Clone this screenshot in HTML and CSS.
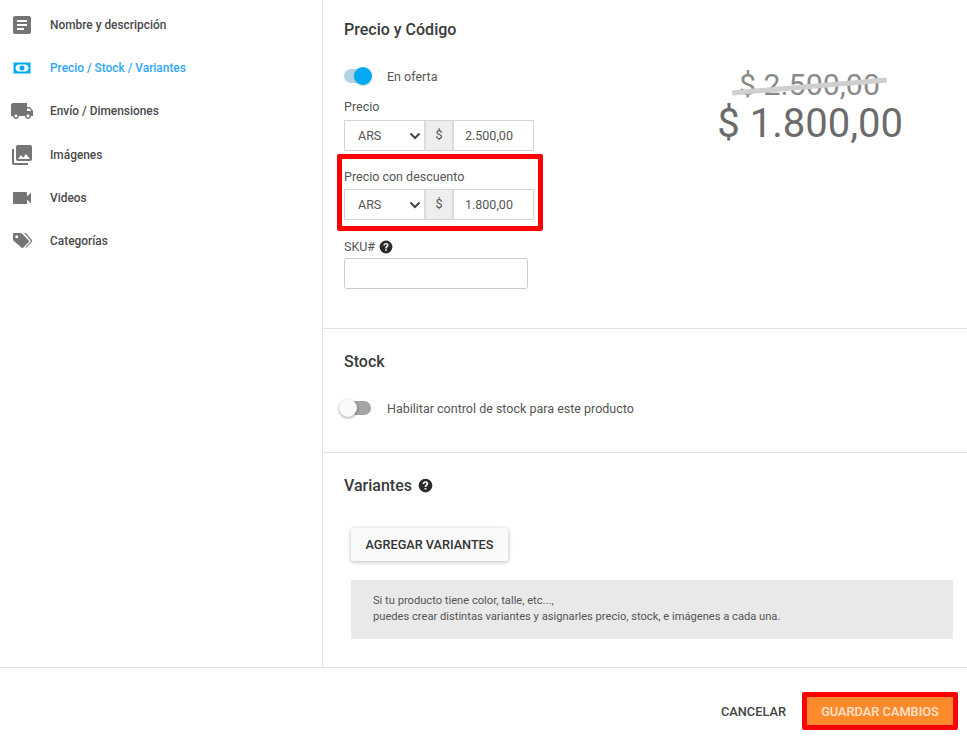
FILE: index.html
```html
<!DOCTYPE html>
<html lang="es">
<head>
<meta charset="utf-8">
<title>Precio / Stock / Variantes</title>
<link rel="stylesheet" href="styles.css">
</head>
<body>
<div class="page">
  <div class="main">
    <nav class="sidebar">
      <a class="nav-item"><span class="nav-icon"><svg width="24" height="24" viewBox="0 0 24 24"><path d="M19 3H5c-1.100 0-2 .9-2 2v14c0 1.100.9 2 2 2h14c1.100 0 2-.9 2-2V5c0-1.100-.9-2-2-2zm-5 14H7v-2h7v2zm3-4H7v-2h10v2zm0-4H7V7h10v2z"/></svg></span>Nombre y descripción</a>
      <a class="nav-item active"><span class="nav-icon"><svg width="24" height="24" viewBox="0 0 24 24"><path fill-rule="evenodd" d="M3.500 6.500h17v11h-17zM9 8.500c-2 0-3.500 1.500-3.500 3.500s1.500 3.500 3.500 3.500h6c2 0 3.500-1.500 3.500-3.500S17 8.500 15 8.500zM12 9.500a2.500 2.500 0 1 1 0 5 2.500 2.500 0 0 1 0-5z"/></svg></span>Precio / Stock / Variantes</a>
      <a class="nav-item"><span class="nav-icon"><svg width="24" height="24" viewBox="0 0 24 24"><path d="M20 8h-3V4H3c-1.100 0-2 .9-2 2v11h2c0 1.660 1.340 3 3 3s3-1.340 3-3h6c0 1.660 1.340 3 3 3s3-1.340 3-3h2v-5l-3-4zM6 18.500c-.83 0-1.500-.67-1.500-1.500s.67-1.500 1.500-1.500 1.500.67 1.500 1.500-.67 1.500-1.500 1.500zm13.500-9l1.960 2.500H17V9.500h2.500zm-1.500 9c-.83 0-1.500-.67-1.500-1.500s.67-1.500 1.500-1.500 1.500.67 1.500 1.500-.67 1.500-1.500 1.500z"/></svg></span>Envío / Dimensiones</a>
      <a class="nav-item"><span class="nav-icon"><svg width="24" height="24" viewBox="0 0 24 24"><path d="M22 16V4c0-1.100-.9-2-2-2H8c-1.100 0-2 .9-2 2v12c0 1.100.9 2 2 2h12c1.100 0 2-.9 2-2zm-11-4l2.030 2.710L16 11l4 5H8l3-4zM2 6v14c0 1.100.9 2 2 2h14v-2H4V6H2z"/></svg></span>Imágenes</a>
      <a class="nav-item"><span class="nav-icon"><svg width="24" height="24" viewBox="0 0 24 24"><path d="M17 10.500V7c0-.55-.45-1-1-1H4c-.55 0-1 .45-1 1v10c0 .55.45 1 1 1h12c.55 0 1-.45 1-1v-3.500l4 4v-11l-4 4z"/></svg></span>Videos</a>
      <a class="nav-item"><span class="nav-icon"><svg width="24" height="24" viewBox="0 0 24 24"><path d="M3 5.500C3 4.700 3.700 4 4.500 4h6c.5 0 1 .2 1.300.6l6.700 6.700c.6.600.6 1.500 0 2.100l-5.100 5.100c-.6.600-1.500.6-2.100 0L3.600 11.800C3.200 11.400 3 11 3 10.500zM6.700 6.200a1.500 1.500 0 1 0 0 3 1.500 1.500 0 0 0 0-3z"/><path d="M14 4h1.200c.4 0 .8.200 1.100.5l5.400 6.300c.6.600.6 1.500 0 2.100l-5 5.500c-.4.400-1 .5-1.500.3l4.700-5.200c.9-.9.900-2.200 0-3z"/></svg></span>Categorías</a>
    </nav>

    <div class="content">
      <section class="section section-price">
        <h2 class="heading">Precio y Código</h2>
        <div class="price-columns">
          <div class="price-form">
            <div class="toggle-row">
              <span class="toggle on"><span class="knob"></span></span>
              <span class="toggle-label">En oferta</span>
            </div>
            <div class="field">
              <label class="label">Precio</label>
              <div class="money">
                <span class="cur">ARS<svg class="chev" width="12" height="8" viewBox="0 0 12 8"><path d="M1.500 1.500 6 6l4.500-4.500" fill="none" stroke="#444" stroke-width="2"/></svg></span>
                <span class="sym">$</span>
                <span class="amt">2.500,00</span>
              </div>
            </div>
            <div class="field field-discount">
              <span class="mark mark-field"></span>
              <label class="label">Precio con descuento</label>
              <div class="money">
                <span class="cur">ARS<svg class="chev" width="12" height="8" viewBox="0 0 12 8"><path d="M1.500 1.500 6 6l4.500-4.500" fill="none" stroke="#444" stroke-width="2"/></svg></span>
                <span class="sym">$</span>
                <span class="amt">1.800,00</span>
              </div>
            </div>
            <div class="field field-sku">
              <label class="label label-help">SKU#
                <svg class="help" width="14" height="14" viewBox="0 0 24 24"><path d="M12 1a11 11 0 1 0 0 22 11 11 0 0 0 0-22zm1.300 17.500h-2.700V16h2.700v2.500zm2.600-7.700c-.9 1.200-2.500 1.600-2.600 3.600h-2.600c0-3 1.600-3.500 2.500-4.500.8-.9.500-2.500-1.200-2.500-1.300 0-2 1-2 2.100H7.500c0-2.500 2-4.300 4.500-4.300 3.500 0 5.500 3 3.900 5.600z"/></svg>
              </label>
              <div class="sku-input"></div>
            </div>
          </div>
          <div class="price-display">
            <div class="old-price">$ 2.500,00<span class="strike"></span></div>
            <div class="new-price">$ 1.800,00</div>
          </div>
        </div>
      </section>

      <section class="section section-stock">
        <h2 class="heading">Stock</h2>
        <div class="toggle-row stock-toggle">
          <span class="toggle off"><span class="knob"></span></span>
          <span class="toggle-label">Habilitar control de stock para este producto</span>
        </div>
      </section>

      <section class="section section-variants">
        <h2 class="heading">Variantes
          <svg class="help" width="15" height="15" viewBox="0 0 24 24"><path d="M12 1a11 11 0 1 0 0 22 11 11 0 0 0 0-22zm1.300 17.500h-2.700V16h2.700v2.500zm2.600-7.700c-.9 1.200-2.500 1.600-2.600 3.600h-2.600c0-3 1.600-3.500 2.500-4.500.8-.9.500-2.500-1.200-2.500-1.300 0-2 1-2 2.100H7.500c0-2.500 2-4.300 4.500-4.300 3.500 0 5.500 3 3.900 5.600z"/></svg>
        </h2>
        <div class="variants-body">
          <button class="btn-add">AGREGAR VARIANTES</button>
          <div class="info">
            <p>Si tu producto tiene color, talle, etc...,</p>
            <p>puedes crear distintas variantes y asignarles precio, stock, e imágenes a cada una.</p>
          </div>
        </div>
      </section>
    </div>
  </div>

  <footer class="footer">
    <button class="btn-cancel">CANCELAR</button>
    <button class="btn-save"><span class="mark mark-save"></span>GUARDAR CAMBIOS</button>
  </footer>
</div>
</body>
</html>
```

FILE: styles.css
```css
* { box-sizing: border-box; }
html, body { margin: 0; padding: 0; height: 100%; }
body {
  background: #fff;
  color: #333;
  font-family: Roboto, "Liberation Sans", sans-serif;
  font-size: 13px;
  overflow: hidden;
}
.page { display: flex; flex-direction: column; height: 736px; }
.main { display: flex; height: 667px; flex: none; }

/* Sidebar */
.sidebar {
  width: 323px;
  flex: none;
  border-right: 1px solid #e6e6e6;
  padding-top: 3.400px;
}
.nav-item {
  display: flex;
  align-items: center;
  height: 43.200px;
  font-size: 11.900px;
  font-weight: 500;
  color: #4a4a4a;
}
.nav-icon {
  width: 50px;
  display: flex;
  justify-content: center;
  padding-right: 6px;
}
.nav-icon svg { fill: #757575; }
.nav-item.active { color: #2ea7f5; }
.nav-item.active svg { fill: #03a9f4; }

/* Content */
.content { flex: 1; min-width: 0; }
.section { padding-left: 21px; border-bottom: 1px solid #e2e2e2; }
.section:last-child { border-bottom: 0; }
.section-price { height: 329px; padding-top: 20px; }
.section-stock { height: 124px; padding-top: 23px; }
.section-variants { padding-top: 23px; }
.heading {
  margin: 0;
  font-size: 16px;
  line-height: 19px;
  font-weight: 500;
  color: #3a3a3a;
  display: flex;
  align-items: center;
  gap: 6px;
}
.price-columns { display: flex; }
.price-form { width: 190px; flex: none; padding-top: 27px; }

/* Toggles */
.toggle-row { display: flex; align-items: center; height: 20px; gap: 16px; }
.toggle {
  position: relative;
  width: 27px;
  height: 14px;
  border-radius: 7px;
  flex: none;
}
.toggle.on { background: #b3d4e2; }
.toggle.off { background: #a3a3a3; }
.knob {
  position: absolute;
  top: -2px;
  width: 18px;
  height: 18px;
  border-radius: 50%;
}
.toggle.on .knob { right: -1px; background: #03a9f4; box-shadow: 0 1px 2px rgba(0,0,0,.2); }
.toggle.off .knob { left: -5px; background: #fafafa; box-shadow: 0 1px 3px rgba(0,0,0,.4); }
.toggle-label { font-size: 12.500px; color: #555; }

/* Money fields */
.field { position: relative; margin-top: 13px; }
.label {
  display: block;
  font-size: 12.500px;
  line-height: 15px;
  color: #555;
  margin-bottom: 6px;
}
.field-discount { margin-top: 18px; }
.field-discount .label { margin-bottom: 5px; }
.field-sku { margin-top: 19px; }
.label-help { display: flex; align-items: center; gap: 4px; margin-bottom: 4px; }
.help { fill: #2b2b2b; flex: none; }
.money {
  display: flex;
  height: 31px;
  width: 190px;
  border: 1px solid #d4d4d4;
  color: #555;
}
.cur {
  width: 79px;
  padding-left: 13px;
  padding-right: 3px;
  display: flex;
  align-items: center;
  justify-content: space-between;
  font-size: 12.500px;
}
.sym {
  width: 30px;
  background: #eee;
  border-left: 2px solid #dcdcdc;
  border-right: 2px solid #dcdcdc;
  display: flex;
  align-items: center;
  justify-content: center;
  font-size: 12.500px;
  padding-bottom: 2px;
}
.amt { flex: 1; display: flex; align-items: center; padding-left: 11px; font-size: 12.500px; }
.sku-input {
  width: 184px;
  height: 31px;
  border: 1px solid #ccc;
  border-radius: 3px;
}

/* Annotations */
.mark { position: absolute; border: 5px solid #f00; border-radius: 2px; pointer-events: none; }
.mark-field { left: -7px; top: -15px; width: 206px; height: 77px; }
.mark-save { inset: -5px; }

/* Price display */
.price-display { flex: 1; padding: 28px 64px 0 0; text-align: right; color: #6b6b6b; }
.old-price {
  position: relative;
  display: inline-block;
  font-size: 30.400px;
  line-height: 36px;
  margin-right: 23px;
  color: #8a8a8a;
}
.strike {
  position: absolute;
  left: -7px;
  right: -7px;
  top: 17px;
  height: 5px;
  background: #cfcfcf;
  transform: rotate(-4.800deg);
}
.new-price { font-size: 40px; line-height: 44px; margin-top: -1px; color: #6b6b6b; }

/* Stock */
.stock-toggle { margin-top: 27px; }

/* Variants */
.variants-body { padding: 33px 14px 0 7px; }
.btn-add {
  display: block;
  width: 157px;
  height: 33px;
  border: 0;
  border-radius: 2px;
  background: #fafafa;
  box-shadow: 0 1px 4px rgba(0,0,0,.28);
  font: 500 12.700px Roboto, sans-serif;
  color: #333;
}
.info {
  margin-top: 19px;
  height: 59px;
  background: #e9e9e9;
  padding: 13px 22px;
  font-size: 11.150px;
  line-height: 16px;
  color: #555;
}
.info p { margin: 0; }

/* Footer */
.footer {
  flex: 1;
  border-top: 1px solid #e2e2e2;
  display: flex;
  justify-content: flex-end;
  align-items: center;
  padding: 18px 14px 0 0;
  gap: 21px;
}
.btn-cancel {
  border: 0;
  background: none;
  padding: 0;
  font: 500 12.800px Roboto, sans-serif;
  color: #444;
}
.btn-save {
  position: relative;
  width: 146px;
  height: 28px;
  border: 0;
  background: #ff8a2b;
  color: #ffe3cc;
  font: 500 12.800px Roboto, sans-serif;
}
```
